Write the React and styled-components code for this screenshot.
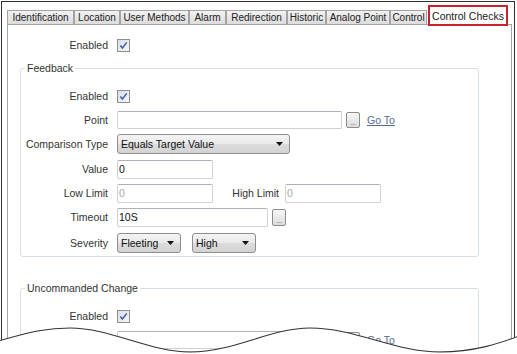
import React from 'react';
import styled, { createGlobalStyle } from 'styled-components';

const Global = createGlobalStyle`
  html, body { margin: 0; padding: 0; background: #fff; }
  body { font-family: "Liberation Sans", Arial, sans-serif; }
`;

const Canvas = styled.div`
  position: relative;
  width: 517px;
  height: 354px;
  overflow: hidden;
  background: #fff;
`;

const Frame = styled.div`
  box-sizing: border-box;
  margin: 1px 0 0 1px;
  width: 514px;
  height: 353px;
  border: 1px solid #2f2f2f;
  border-bottom: none;
  padding: 3px 2px 0 5px;
  display: flex;
  flex-direction: column;
`;

const TabStrip = styled.div`
  display: flex;
  align-items: flex-end;
  height: 19px;
  position: relative;
  z-index: 1;
`;

const Tab = styled.div`
  box-sizing: border-box;
  width: ${p => p.$w}px;
  height: 14px;
  border: 1px solid #a3a3a3;
  border-bottom: none;
  background: linear-gradient(#f2f2f2, #dcdcdc);
  font-family: "Liberation Sans", Arial, sans-serif;
  font-size: 10px;
  color: #222;
  display: flex;
  align-items: center;
  justify-content: center;
  white-space: nowrap;
`;

const ActiveTab = styled.div`
  box-sizing: border-box;
  width: 80px;
  height: 21px;
  margin-left: 1px;
  margin-bottom: -2px;
  border: 2px solid #c9222c;
  background: #fff;
  font-family: "Liberation Sans", Arial, sans-serif;
  font-size: 10.5px;
  color: #1a1a1a;
  display: flex;
  align-items: center;
  justify-content: center;
  white-space: nowrap;
`;

const Panel = styled.div`
  flex: 1;
  border: 1px solid #a3a3a3;
  border-bottom: none;
  background: #fff;
  padding-top: 8px;
`;

const Group = styled.fieldset`
  box-sizing: border-box;
  width: 459px;
  min-width: 0;
  margin: ${p => p.$mt}px 0 0 12px;
  padding: 9px 0 0 4px;
  border: 1px solid #d6dfe6;
  border-radius: 3px;
`;

const Legend = styled.legend`
  padding: 0 2px;
  font-size: 10.5px;
  line-height: 13px;
  color: #333;
`;

const Row = styled.div`
  display: flex;
  align-items: center;
  height: ${p => p.$h || 24}px;
`;

const Label = styled.div`
  flex-shrink: 0;
  width: ${p => p.$w}px;
  margin-right: ${p => (p.$gap ?? 9)}px;
  margin-left: ${p => p.$ml || 0}px;
  text-align: right;
  font-size: 10.5px;
  color: #333;
  white-space: nowrap;
`;

const Field = styled.div`
  box-sizing: border-box;
  flex-shrink: 0;
  width: ${p => p.$w}px;
  height: ${p => p.$h || 19}px;
  border: 1px solid #cdd0d4;
  border-top-color: #adb0b6;
  border-radius: 2px;
  background: #fff;
  padding: 0 1px 1px;
  display: flex;
  align-items: center;
  font-size: 10.5px;
  color: ${p => (p.$muted ? '#a8a8a8' : '#111')};
`;

const Browse = styled.div`
  box-sizing: border-box;
  flex-shrink: 0;
  width: 14px;
  height: ${p => p.$h || 16}px;
  margin-left: ${p => p.$ml || 4}px;
  border: 1px solid #8c8c8c;
  border-radius: 2px;
  background: linear-gradient(#f7f7f7, #dcdcdc);
  display: flex;
  align-items: flex-end;
  justify-content: center;
  font-size: 7px;
  line-height: 9px;
  color: #666;
  letter-spacing: -0.5px;
`;

const LinkText = styled.span`
  margin-left: 7px;
  font-size: 10.5px;
  color: #566a8f;
  text-decoration: underline;
`;

const Combo = styled.div`
  box-sizing: border-box;
  flex-shrink: 0;
  width: ${p => p.$w}px;
  height: 20px;
  margin-left: ${p => p.$ml || 0}px;
  border: 1px solid #8e8e8e;
  border-radius: 3px;
  background: linear-gradient(#f4f4f4 0%, #e9e9e9 50%, #dcdcdc 51%, #d3d3d3 100%);
  display: flex;
  align-items: center;
  justify-content: space-between;
  padding: 0 6px 0 3px;
  font-size: 10.5px;
  color: #111;
`;

const CheckBox = styled.div`
  box-sizing: border-box;
  width: 13px;
  height: 13px;
  border: 1px solid #8f8f8f;
  background: linear-gradient(135deg, #d9dee6, #f5f6f8);
  display: flex;
  align-items: center;
  justify-content: center;
`;

const Torn = styled.svg`
  position: absolute;
  left: 0;
  bottom: 0;
  width: 517px;
  height: 40px;
`;

const Arrow = () => (
  <svg width="7" height="4" viewBox="0 0 7 4">
    <path d="M0 0 H7 L3.5 4 Z" fill="#111" />
  </svg>
);

const Check = () => (
  <CheckBox>
    <svg width="9" height="9" viewBox="0 0 9 9">
      <path d="M1.3 4.6 L3.4 7 L7.8 1.4" fill="none" stroke="#3f5fa6" strokeWidth="1.5" />
    </svg>
  </CheckBox>
);

const tabs = [
  ['Identification', 67],
  ['Location', 46],
  ['User Methods', 69],
  ['Alarm', 37],
  ['Redirection', 61],
  ['Historic', 39],
  ['Analog Point', 64],
  ['Control', 37],
];

export default function App() {
  return (
    <Canvas>
      <Global />
      <Frame>
        <TabStrip>
          {tabs.map(([t, w]) => (
            <Tab key={t} $w={w}>{t}</Tab>
          ))}
          <ActiveTab>Control Checks</ActiveTab>
        </TabStrip>
        <Panel>
          <Row>
            <Label $w={100}>Enabled</Label>
            <Check />
          </Row>
          <Group $mt={5}>
            <Legend>Feedback</Legend>
            <Row>
              <Label $w={83}>Enabled</Label>
              <Check />
            </Row>
            <Row $h={23}>
              <Label $w={83}>Point</Label>
              <Field $w={225} $h={18} />
              <Browse>...</Browse>
              <LinkText>Go To</LinkText>
            </Row>
            <Row $h={26}>
              <Label $w={83}>Comparison Type</Label>
              <Combo $w={173}>
                <span>Equals Target Value</span>
                <Arrow />
              </Combo>
            </Row>
            <Row>
              <Label $w={83}>Value</Label>
              <Field $w={96}>0</Field>
            </Row>
            <Row>
              <Label $w={83}>Low Limit</Label>
              <Field $w={96} $muted>0</Field>
              <Label $w={47} $ml={19} $gap={6}>High Limit</Label>
              <Field $w={96} $muted>0</Field>
            </Row>
            <Row>
              <Label $w={83}>Timeout</Label>
              <Field $w={151}>10S</Field>
              <Browse $h={17}>...</Browse>
            </Row>
            <Row $h={27}>
              <Label $w={83}>Severity</Label>
              <Combo $w={64}>
                <span>Fleeting</span>
                <Arrow />
              </Combo>
              <Combo $w={64} $ml={11}>
                <span>High</span>
                <Arrow />
              </Combo>
            </Row>
          </Group>
          <Group $mt={25}>
            <Legend>Uncommanded Change</Legend>
            <Row>
              <Label $w={83}>Enabled</Label>
              <Check />
            </Row>
            <Row $h={23}>
              <Label $w={83}>Point</Label>
              <Field $w={225} $h={18} />
              <Browse>...</Browse>
              <LinkText>Go To</LinkText>
            </Row>
          </Group>
        </Panel>
      </Frame>
      <Torn viewBox="0 314 517 40">
        <path
          d="M-2 341 C 25 334, 42 328, 70 328 C 110 328, 150 352, 190 352 C 235 352, 270 328, 310 328 C 355 328, 395 352, 440 352 C 475 352, 500 343, 519 336 L 519 356 L -2 356 Z"
          fill="#fff"
        />
        <path
          d="M-2 341 C 25 334, 42 328, 70 328 C 110 328, 150 352, 190 352 C 235 352, 270 328, 310 328 C 355 328, 395 352, 440 352 C 475 352, 500 343, 519 336"
          fill="none"
          stroke="#333"
          strokeWidth="1.1"
        />
      </Torn>
    </Canvas>
  );
}
